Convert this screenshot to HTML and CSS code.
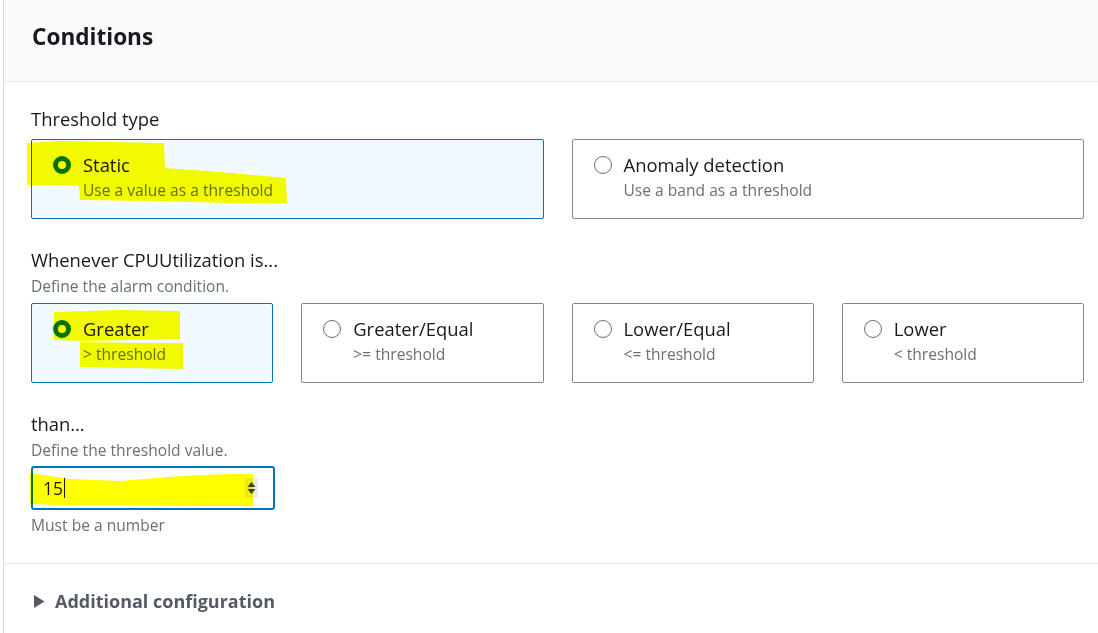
FILE: index.html
```html
<!DOCTYPE html>
<html>
<head>
<meta charset="utf-8">
<link rel="stylesheet" href="styles.css">
</head>
<body>
<div class="panel">
  <div class="header"><h2 class="title">Conditions</h2></div>
  <div class="content">
    <div class="field">
      <div class="label">Threshold type</div>
      <div class="tiles two">
        <div class="tile selected">
          <span class="radio on"></span>
          <div class="tile-text"><div class="tile-title">Static</div><div class="tile-desc">Use a value as a threshold</div></div>
        </div>
        <div class="tile">
          <span class="radio"></span>
          <div class="tile-text"><div class="tile-title">Anomaly detection</div><div class="tile-desc">Use a band as a threshold</div></div>
        </div>
      </div>
    </div>
    <div class="field">
      <div class="label">Whenever CPUUtilization is...</div>
      <div class="hint">Define the alarm condition.</div>
      <div class="tiles four">
        <div class="tile selected">
          <span class="radio on"></span>
          <div class="tile-text"><div class="tile-title">Greater</div><div class="tile-desc">&gt; threshold</div></div>
        </div>
        <div class="tile">
          <span class="radio"></span>
          <div class="tile-text"><div class="tile-title">Greater/Equal</div><div class="tile-desc">&gt;= threshold</div></div>
        </div>
        <div class="tile">
          <span class="radio"></span>
          <div class="tile-text"><div class="tile-title">Lower/Equal</div><div class="tile-desc">&lt;= threshold</div></div>
        </div>
        <div class="tile">
          <span class="radio"></span>
          <div class="tile-text"><div class="tile-title">Lower</div><div class="tile-desc">&lt; threshold</div></div>
        </div>
      </div>
    </div>
    <div class="field">
      <div class="label">than…</div>
      <div class="hint">Define the threshold value.</div>
      <div class="input">
        <span class="value">15</span><span class="caret"></span>
        <span class="spinner">
          <svg width="11" height="16" viewBox="0 0 11 16"><path d="M5.5 2 L9.5 7 L1.5 7 Z M5.5 14 L9.5 9 L1.5 9 Z" fill="#3f3f3f"/></svg>
        </span>
      </div>
      <div class="hint after">Must be a number</div>
    </div>
  </div>
  <div class="footer">
    <svg class="tri" width="12" height="15" viewBox="0 0 12 15"><path d="M1 1 L11.5 7.5 L1 14 Z" fill="#545b64"/></svg>
    <span class="footer-text">Additional configuration</span>
  </div>
</div>
<svg class="highlight" width="1098" height="633" viewBox="0 0 1098 633">
  <path d="M27 143 L60 141 L110 142 L164 143 L165 168 L220 172 L286 178 L287 203 L230 203 L150 201 L80 200 L79 186 L50 185 L27 185 Z" fill="#ffff00"/>
  <path d="M54 312 L120 310 L180 311 L180 339 L130 340 L86 341 L54 340 Z M80 342 L140 343 L183 343 L183 369 L130 368 L80 367 Z" fill="#ffff00"/>
  <path d="M30 473 L70 479 L120 481 L180 476 L230 474 L253 474 L253 506 L200 506 L120 505 L60 505 L30 504 Z" fill="#ffff00"/>
</svg>
</body>
</html>
```
FILE: styles.css
```css
html, body {
  margin: 0;
  padding: 0;
  background: #ffffff;
}
body {
  font-family: "Open Sans", "Noto Sans", sans-serif;
  color: #16191f;
  width: 1098px;
  height: 633px;
  overflow: hidden;
  position: relative;
}
.panel {
  margin-left: 3px;
  border-left: 1px solid #d5dbdb;
  height: 633px;
  box-sizing: border-box;
}
.header {
  background: #fafafa;
  height: 81px;
  border-bottom: 1px solid #eaeded;
  display: flex;
  align-items: center;
  padding-left: 28px;
  box-sizing: content-box;
}
.title {
  margin: 0;
  font-size: 22.6px;
  font-weight: 700;
  line-height: 28px;
  margin-top: -7px;
}
.content {
  padding: 26px 14px 0 27px;
}
.field + .field {
  margin-top: 30px;
}
.label {
  font-size: 18.4px;
  line-height: 22px;
}
.hint {
  font-size: 15.6px;
  line-height: 20px;
  color: #687078;
  margin-top: 5px;
}
.hint.after {
  margin-top: 5px;
}
.tiles {
  display: grid;
  gap: 28px;
  margin-top: 9px;
}
.field .hint + .tiles {
  margin-top: 7px;
}
.tiles.two { grid-template-columns: 1fr 1fr; }
.tiles.four { grid-template-columns: 1fr 1fr 1fr 1fr; }
.tile {
  height: 80px;
  box-sizing: border-box;
  border: 1px solid #7d8998;
  border-radius: 2px;
  display: flex;
  align-items: flex-start;
  padding: 13px 0 0 21px;
  gap: 12px;
  background: #fff;
}
.tile.selected {
  border-color: #0073bb;
  background: #f1faff;
}
.radio {
  width: 18px;
  height: 18px;
  box-sizing: border-box;
  border: 1.5px solid #687078;
  border-radius: 50%;
  margin-top: 3px;
  flex: none;
  background: #fff;
}
.radio.on {
  border: 5px solid #0073bb;
}
.tile-title {
  font-size: 18.4px;
  line-height: 24px;
}
.tile-desc {
  font-size: 15.6px;
  line-height: 22px;
  color: #687078;
  margin-top: 2px;
}
.input {
  margin-top: 6px;
  width: 244px;
  height: 44px;
  box-sizing: border-box;
  border: 2px solid #0073bb;
  border-radius: 3px;
  display: flex;
  align-items: center;
  padding: 0 15px 0 10px;
}
.value {
  font-size: 17.5px;
  line-height: 20px;
}
.caret {
  width: 1px;
  height: 20px;
  background: #16191f;
  margin-left: 1px;
}
.spinner {
  margin-left: auto;
  width: 13px;
  height: 20px;
  background: #ececec;
  display: flex;
  align-items: center;
  justify-content: center;
}
.footer {
  margin-top: 28px;
  border-top: 1px solid #eaeded;
  height: 74px;
  display: flex;
  align-items: center;
  padding-left: 29px;
  gap: 10px;
}
.tri { margin-top: 1px; }
.footer-text {
  font-size: 18px;
  font-weight: 700;
  color: #545b64;
  line-height: 24px;
}
.highlight {
  position: absolute;
  left: 0;
  top: 0;
  mix-blend-mode: multiply;
  pointer-events: none;
}
```
